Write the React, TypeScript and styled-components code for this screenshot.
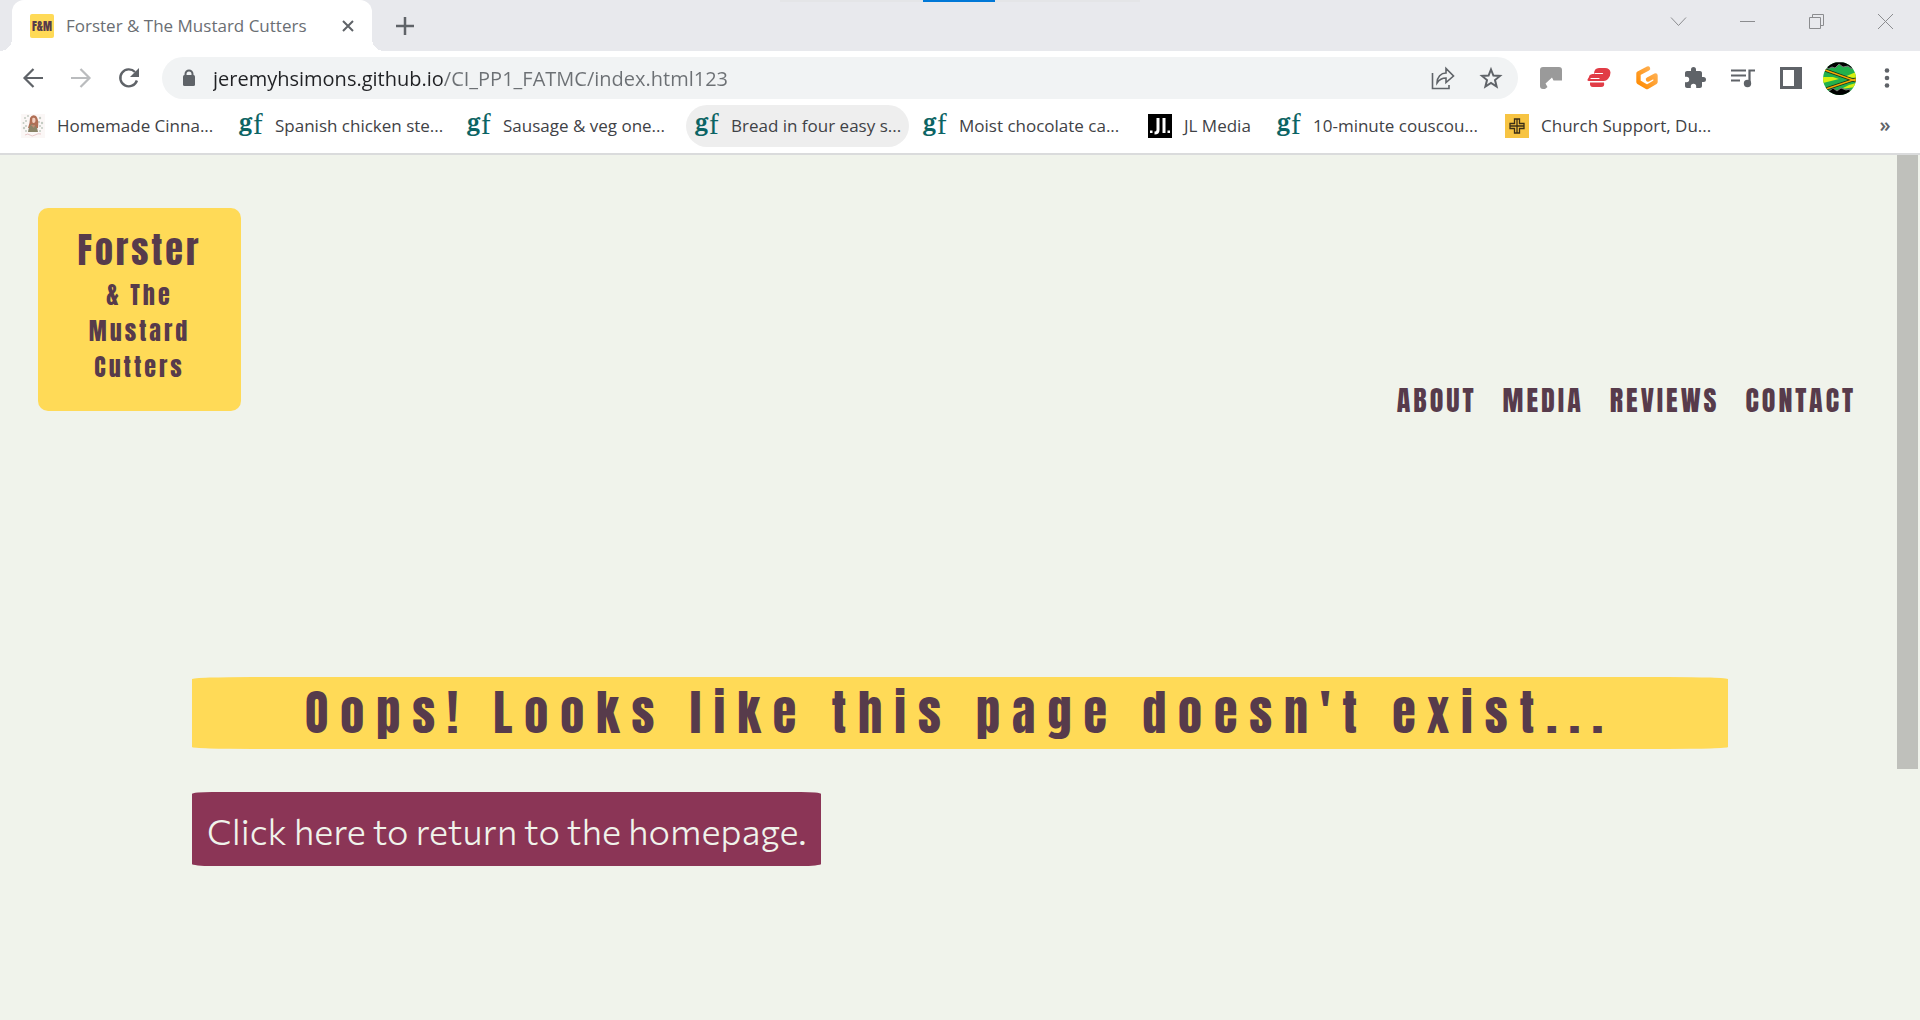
import React from "react";
import styled, { createGlobalStyle } from "styled-components";

const ui = `"Segoe UI", "Open Sans", "Noto Sans", sans-serif`;
const display = `Anton, "Liberation Sans Narrow", "Roboto Condensed", "Liberation Sans", sans-serif`;

const GlobalStyle = createGlobalStyle`
  *, *::before, *::after { box-sizing: border-box; }
  body { margin: 0; background: #f0f3eb; font-family: ${ui}; }
  button, input { font: inherit; border: 0; padding: 0; background: none; color: inherit; }
  a { color: inherit; text-decoration: none; }
  svg { display: block; flex: none; overflow: visible; }
`;

const Window = styled.div`
  min-height: 100vh;
  display: flex;
  flex-direction: column;
`;

const TabStrip = styled.div`
  position: relative;
  display: flex;
  height: 51px;
  padding-left: 12px;
  background: #e8e9ed;
`;

const DragHandle = styled.div`
  position: absolute;
  top: 0;
  left: 50%;
  transform: translateX(-50%);
  width: 360px;
  height: 2px;
  background: linear-gradient(#0078d7, #0078d7) 143px 0 / 72px 2px no-repeat #e4e5e7;
`;

const Tab = styled.div`
  position: relative;
  display: flex;
  align-items: center;
  width: 360px;
  padding: 0 18px;
  background: #fff;
  border-radius: 12px 12px 0 0;
  &::before, &::after {
    content: "";
    position: absolute;
    bottom: 0;
    width: 12px;
    height: 12px;
  }
  &::before { right: 100%; background: radial-gradient(circle at 0 0, #e8e9ed 12px, #fff 12px); }
  &::after { left: 100%; background: radial-gradient(circle at 100% 0, #e8e9ed 12px, #fff 12px); }
`;

const TabTitle = styled.span`
  flex: 1;
  margin-left: 12px;
  font-size: 17px;
  line-height: 24px;
  color: #6a6e73;
  white-space: nowrap;
`;

const IconButton = styled.button<{ $size?: number }>`
  display: grid;
  place-items: center;
  flex: none;
  width: ${(p) => p.$size ?? 48}px;
  height: ${(p) => Math.min(p.$size ?? 42, 42)}px;
  color: #5f6368;
`;

const NewTab = styled(IconButton)`
  align-self: center;
  margin-left: 12px;
`;

const WindowControls = styled.div`
  display: flex;
  margin-left: auto;
  color: #8b8c8f;
`;

const WindowButton = styled.button`
  display: grid;
  place-items: center;
  width: 69px;
  height: 43px;
`;

const Toolbar = styled.div`
  display: flex;
  align-items: center;
  height: 54px;
  padding: 0 9px;
  background: #fff;
`;

const Omnibox = styled.div`
  display: flex;
  align-items: center;
  flex: 1;
  height: 42px;
  margin: 0 9px;
  padding-left: 12px;
  padding-right: 3px;
  border-radius: 21px;
  background: #f1f3f4;
`;

const Address = styled.input`
  flex: 1;
  min-width: 0;
  height: 42px;
  margin-left: 9px;
  outline: 0;
  font-size: 20px;
  color: #202124;
  background: linear-gradient(to right, #202124 231px, #6c7074 231px);
  background-clip: text;
  -webkit-text-fill-color: transparent;
`;

const Bookmarks = styled.nav`
  display: flex;
  align-items: center;
  gap: 5px;
  height: 50px;
  padding: 0 14px 6px 12px;
  background: #fff;
  border-bottom: 2px solid #dadbdc;
`;

const Bookmark = styled.a<{ $active?: boolean; $width: number }>`
  display: flex;
  align-items: center;
  gap: 12px;
  width: ${(p) => p.$width}px;
  height: 42px;
  padding-left: 9px;
  border-radius: 21px;
  background: ${(p) => (p.$active ? "#eeeeee" : "transparent")};
  font-size: 17px;
  line-height: 24px;
  color: #3f4246;
  white-space: nowrap;
`;

const More = styled.button`
  width: 42px;
  height: 42px;
  padding-bottom: 4px;
  margin-left: auto;
  font-size: 20px;
  font-weight: 600;
  color: #5f6368;
`;

const Page = styled.div`
  position: relative;
  flex: 1;
  background: #f0f3eb;
  color: #573b4b;
`;

const ScrollThumb = styled.div`
  position: absolute;
  top: 0;
  right: 2px;
  width: 21px;
  height: 71%;
  background: #bfc0bb;
`;

const Header = styled.header`
  display: flex;
  align-items: flex-end;
  justify-content: space-between;
  padding: 53px 64px 0 38px;
`;

const Logo = styled.a`
  display: flex;
  flex-direction: column;
  align-items: center;
  width: 203px;
  height: 203px;
  margin-bottom: 10px;
  padding-top: 15px;
  border-radius: 10px;
  background: #ffda57;
  font-family: ${display};
  font-size: 24px;
  line-height: 36px;
  letter-spacing: 3px;
  text-align: center;
`;

const LogoName = styled.span`
  font-size: 36px;
  line-height: 54px;
`;

const SiteNav = styled.nav`
  display: flex;
  gap: 26px;
  font-family: ${display};
  font-size: 28px;
  line-height: 42px;
  letter-spacing: 3px;
  text-transform: uppercase;
`;

const Main = styled.main`
  padding: 256px 10% 0;
`;

const Title = styled.h1`
  margin: 0 0 43px;
  border-radius: 60px / 2px;
  background: #ffda57;
  font-family: ${display};
  font-weight: 400;
  font-size: 48px;
  line-height: 72px;
  letter-spacing: 12px;
  text-align: center;
`;

const HomeLink = styled.a`
  display: inline-block;
  padding: 6px 15px 4px;
  border-radius: 20px / 2px;
  background: #8b3556;
  font-family: Commissioner, Lato, "Open Sans", sans-serif;
  font-weight: 300;
  font-size: 36px;
  line-height: 64px;
  color: #f0f3eb;
`;

const SiteIcon = () => (
  <svg width="24" height="24" viewBox="0 0 24 24" aria-hidden="true">
    <rect width="24" height="24" rx="2" fill="#ffda57" />
    <text x="12" y="17" textAnchor="middle" fontFamily={display} fontSize="12" fill="#573b4b">F&amp;M</text>
  </svg>
);

const GoodFood = () => (
  <svg width="24" height="24" viewBox="0 0 24 24" aria-hidden="true" fill="#0b6464">
    <text x="0" y="17" fontFamily="Noto Serif, DejaVu Serif, serif" fontWeight="700" fontSize="24">g</text>
    <text x="14" y="20" fontFamily="Liberation Serif, serif" fontSize="29">f</text>
  </svg>
);

const Portrait = () => (
  <svg width="24" height="24" viewBox="0 0 24 24" aria-hidden="true">
    <rect width="24" height="24" fill="#fbf7f6" />
    <g fill="#c3cbc2">
      <circle cx="4" cy="4" r="1" /><circle cx="7" cy="2" r="1" /><circle cx="19" cy="4" r="1.200" /><circle cx="2.500" cy="9" r="1" />
      <circle cx="21" cy="9" r="1.200" /><circle cx="3" cy="14" r="1.200" /><circle cx="21" cy="14" r="1" /><circle cx="5" cy="17" r="1" /><circle cx="19" cy="17" r="1" />
      <circle cx="5" cy="7" r="1" /><circle cx="18" cy="8" r="1" /><circle cx="5" cy="12" r="1" /><circle cx="19" cy="12" r="1" />
    </g>
    <path d="M9 4q2-4 6-2 3 3 2 12l-3 1-7-1q2-5 2-10z" fill="#b06f55" />
    <path d="M11.500 4q3-1 3 2t-2 3-1-5z" fill="#f2cfc0" />
    <path d="M7 18q1-7 4-8 5 1 6 8z" fill="#8a8468" />
    <path d="M10 11l3 3 1-3z" fill="#c28a72" />
    <path d="M4 21q3-2 5 0t5 0 6-1" stroke="#e9c9ca" fill="none" />
  </svg>
);

const JL = () => (
  <svg width="24" height="24" viewBox="0 0 24 24" aria-hidden="true">
    <rect width="24" height="24" fill="#000" />
    <path d="M10 4v12q0 3-3.500 3M16 4v15" stroke="#fff" strokeWidth="3" fill="none" />
    <path d="M2 16.500h2.500v2.500h-2.500zM19.500 16.500h2.500v2.500h-2.500z" fill="#fff" />
  </svg>
);

const Church = () => (
  <svg width="24" height="24" viewBox="0 0 24 24" aria-hidden="true">
    <rect width="24" height="24" fill="#f7c443" />
    <path d="M9.500 5h5v4.500h4.500v5h-4.500v4.500h-5v-4.500h-4.500v-5h4.500zM12 5v14M5 12h14" stroke="#3b2d16" strokeWidth="1.300" fill="none" />
  </svg>
);

const Avatar = () => (
  <svg width="33" height="33" viewBox="0 0 33 33" aria-hidden="true">
    <clipPath id="avatar"><circle cx="16.500" cy="16.500" r="16.500" /></clipPath>
    <g clipPath="url(#avatar)">
      <rect width="33" height="33" fill="#22b14c" />
      <path d="M0 15l10 0 6 2-8 2-8 2zM33 10l-12 5 12 1zM18 27l8-4 7-2v4z" fill="#d7ef10" />
      <path d="M5 7l4-2 3 1 4-4 4 3 5-1 4 3V0H2zM5 30l5-4 4 3 4-3 5 2 4-1v8H3z" fill="#000" stroke="#777" />
      <path d="M2 8l31 11M3 27l30-10" stroke="#17331b" strokeWidth="3" />
      <path d="M2 8l31 11M3 27l30-10" stroke="#f5a800" strokeWidth="1.400" />
    </g>
  </svg>
);

const bookmarks = [
  { label: "Homemade Cinna...", icon: <Portrait />, width: 213 },
  { label: "Spanish chicken ste...", icon: <GoodFood />, width: 223 },
  { label: "Sausage & veg one...", icon: <GoodFood />, width: 223 },
  { label: "Bread in four easy s...", icon: <GoodFood />, width: 223, active: true },
  { label: "Moist chocolate ca...", icon: <GoodFood />, width: 220 },
  { label: "JL Media", icon: <JL />, width: 124 },
  { label: "10-minute couscou...", icon: <GoodFood />, width: 223 },
  { label: "Church Support, Du...", icon: <Church />, width: 223 },
];

export default function App() {
  return (
    <Window>
      <GlobalStyle />
      <TabStrip>
        <DragHandle />
        <Tab>
          <SiteIcon />
          <TabTitle>Forster &amp; The Mustard Cutters</TabTitle>
          <IconButton $size={12} aria-label="Close tab">
            <svg width="12" height="12" viewBox="0 0 12 12"><path d="M1 1l10 10M11 1L1 11" stroke="currentColor" strokeWidth="2" /></svg>
          </IconButton>
        </Tab>
        <NewTab $size={42} aria-label="New tab">
          <svg width="18" height="18" viewBox="0 0 18 18"><path d="M9 0v18M0 9h18" stroke="currentColor" strokeWidth="2.500" /></svg>
        </NewTab>
        <WindowControls>
          <WindowButton aria-label="Search tabs">
            <svg width="15" height="15" viewBox="0 0 15 15" fill="none" stroke="currentColor"><path d="M0 3.500l7.500 8 7.500-8" /></svg>
          </WindowButton>
          <WindowButton aria-label="Minimise">
            <svg width="15" height="15" viewBox="0 0 15 15" fill="none" stroke="currentColor"><path d="M0 7.500h15" /></svg>
          </WindowButton>
          <WindowButton aria-label="Restore">
            <svg width="15" height="15" viewBox="0 0 15 15" fill="none" stroke="currentColor"><path d="M.5 3.500h11v11H.5zM3.500 3.500v-3h11v11h-3" /></svg>
          </WindowButton>
          <WindowButton aria-label="Close">
            <svg width="15" height="15" viewBox="0 0 15 15" fill="none" stroke="currentColor"><path d="M0 0l15 15M15 0L0 15" /></svg>
          </WindowButton>
        </WindowControls>
      </TabStrip>

      <Toolbar>
        <IconButton aria-label="Back">
          <svg width="20" height="20" viewBox="0 0 20 20" fill="none" stroke="currentColor" strokeWidth="2.200"><path d="M20 10H2M10.500 1L1.500 10l9 9" /></svg>
        </IconButton>
        <IconButton aria-label="Forward">
          <svg width="20" height="20" viewBox="0 0 20 20" fill="none" stroke="#babcbe" strokeWidth="2.200"><path d="M0 10h18M9.500 1l9 9-9 9" /></svg>
        </IconButton>
        <IconButton aria-label="Reload">
          <svg width="20" height="20" viewBox="0 0 20 20"><path d="M17.900 12.500A8.500 8.500 0 1 1 16 4" fill="none" stroke="currentColor" strokeWidth="2.400" /><path d="M20 0v9h-9z" fill="currentColor" /></svg>
        </IconButton>
        <Omnibox>
          <IconButton $size={30} aria-label="Site information">
            <svg width="14" height="18" viewBox="0 0 14 18"><path d="M3.500 8V5a3.500 3.500 0 0 1 7 0v3" fill="none" stroke="currentColor" strokeWidth="2" /><rect x="1" y="6" width="12" height="11" rx="1.500" fill="currentColor" /></svg>
          </IconButton>
          <Address aria-label="Address" defaultValue="jeremyhsimons.github.io/CI_PP1_FATMC/index.html123" spellCheck={false} />
          <IconButton aria-label="Share">
            <svg width="24" height="24" viewBox="0 0 24 24" fill="none" stroke="currentColor" strokeWidth="1.600"><path d="M1.500 7v15.500h16.500V19M6 17c0-6 4-10 9-10V2.500L22.500 10 15 16.500V12c-4 0-7 2-9 5z" /></svg>
          </IconButton>
          <IconButton aria-label="Bookmark this page">
            <svg width="24" height="24" viewBox="0 0 24 24" fill="none" stroke="currentColor" strokeWidth="2"><path d="M12 3.500l2.400 6 6.600.4-5 4.200 1.600 6.400-5.600-3.600-5.600 3.600L8 14.100 3 9.900l6.600-.4z" /></svg>
          </IconButton>
        </Omnibox>
        <IconButton aria-label="Extension: notes">
          <svg width="22" height="22" viewBox="0 0 22 22" fill="#9a9a9a"><path d="M3 0h16q3 0 3 3v10.500h-8.500l-1.500-3-6.500 6 2 3.500-2.500 2H3q-3 0-3-3V3q0-3 3-3z" /></svg>
        </IconButton>
        <IconButton aria-label="Extension: stack">
          <svg width="24" height="22" viewBox="0 0 24 22" fill="#e13c46">
            <path d="M12 1h6q5 0 5.500 4.500 0 4-2.500 6.500-2 2-4 2H2q-2 0-1.500-1.500L2 10q0-2.500 3.500-3H7Q7 1 12 1zM3 15.500h14q1 4.500-3 4.500H6q-3.500 0-3-4.500z" />
            <path d="M8 6.500h7.500M4 11.500h8" stroke="#fff" strokeWidth="1.200" strokeLinecap="round" />
          </svg>
        </IconButton>
        <IconButton aria-label="Extension: Gitpod">
          <svg width="24" height="24" viewBox="0 0 24 24" fill="none" strokeLinecap="round" strokeLinejoin="round"><defs><linearGradient id="gp" x1="1" y1="0" x2="0" y2="1"><stop stopColor="#ffb45b" /><stop offset="1" stopColor="#ff8a00" /></linearGradient></defs><path d="M13 2.500L3.500 7.500v8.500l8.500 5 8.500-5V9.500l-7.500 4" stroke="url(#gp)" strokeWidth="4.400" /></svg>
        </IconButton>
        <IconButton aria-label="Extensions">
          <svg width="24" height="24" viewBox="0 0 24 24" fill="currentColor"><path d="M20.500 11H19V7c0-1.100-.9-2-2-2h-4V3.500a2.500 2.500 0 0 0-5 0V5H4c-1.100 0-2 .9-2 2v3.800h1.500a2.700 2.700 0 0 1 0 5.400H2V20c0 1.100.9 2 2 2h3.800v-1.500a2.700 2.700 0 0 1 5.400 0V22H17c1.100 0 2-.9 2-2v-4h1.500a2.500 2.500 0 0 0 0-5z" /></svg>
        </IconButton>
        <IconButton aria-label="Media controls">
          <svg width="24" height="20" viewBox="0 0 24 20" fill="none" stroke="currentColor" strokeWidth="2.200"><path d="M0 2.500h15M0 7.500h15M0 12.500h9M24 2.500h-5.500V15" /><circle cx="16.500" cy="15.500" r="2.600" fill="currentColor" /></svg>
        </IconButton>
        <IconButton aria-label="Side panel">
          <svg width="22" height="22" viewBox="0 0 22 22"><path fillRule="evenodd" d="M0 0h22v22H0zM3 3v16h11V3z" fill="currentColor" /></svg>
        </IconButton>
        <IconButton aria-label="Profile"><Avatar /></IconButton>
        <IconButton aria-label="Menu">
          <svg width="6" height="20" viewBox="0 0 6 20" fill="currentColor"><circle cx="3" cy="2.500" r="2.300" /><circle cx="3" cy="10" r="2.300" /><circle cx="3" cy="17.500" r="2.300" /></svg>
        </IconButton>
      </Toolbar>

      <Bookmarks aria-label="Bookmarks">
        {bookmarks.map((b) => (
          <Bookmark key={b.label} href="#" $active={b.active} $width={b.width}>
            {b.icon}
            {b.label}
          </Bookmark>
        ))}
        <More aria-label="More bookmarks">»</More>
      </Bookmarks>

      <Page>
        <Header>
          <Logo href="#">
            <LogoName>Forster</LogoName>
            <span>&amp; The<br />Mustard<br />Cutters</span>
          </Logo>
          <SiteNav aria-label="Site">
            <a href="#about">About</a>
            <a href="#media">Media</a>
            <a href="#reviews">Reviews</a>
            <a href="#contact">Contact</a>
          </SiteNav>
        </Header>
        <Main>
          <Title>Oops! Looks like this page doesn't exist...</Title>
          <HomeLink href="#">Click here to return to the homepage.</HomeLink>
        </Main>
        <ScrollThumb />
      </Page>
    </Window>
  );
}
